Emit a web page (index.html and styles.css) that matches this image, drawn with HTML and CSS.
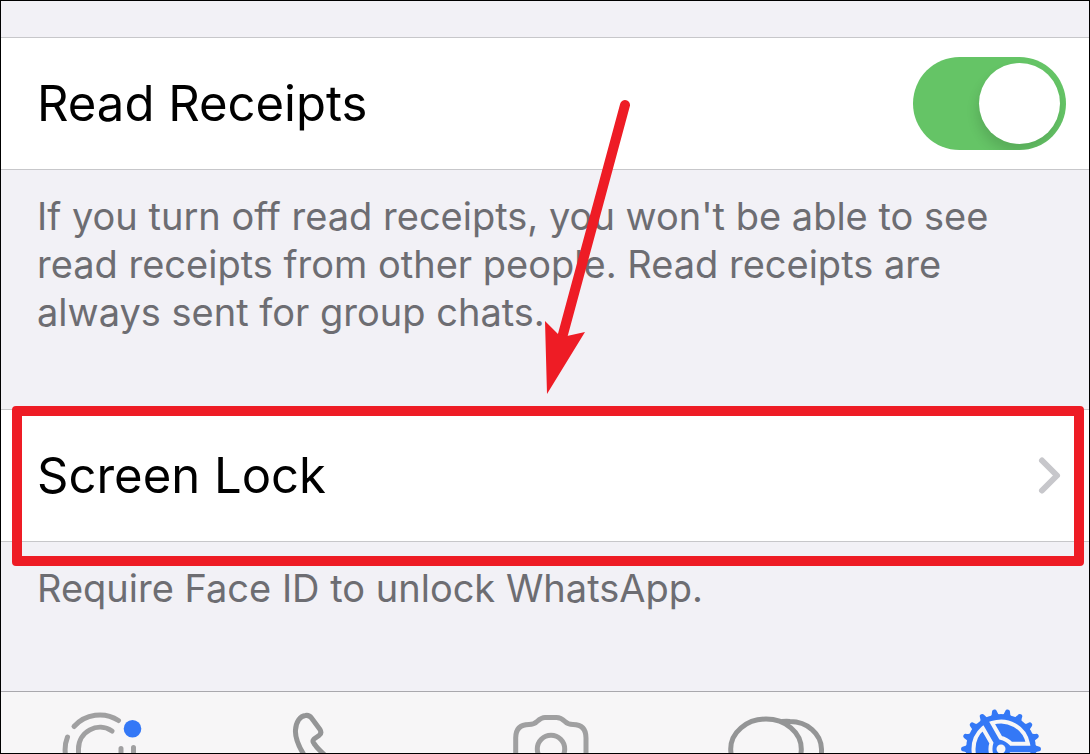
FILE: index.html
```html
<!DOCTYPE html>
<html lang="en">
<head>
  <meta charset="UTF-8" />
  <title>Privacy</title>
  <meta name="viewport" content="width=device-width, initial-scale=1.0" />
  <link rel="stylesheet" href="styles.css">
</head>
<body>

  <main class="settings">
    <section class="group">
      <label class="row" for="receipts">
        <span>Read Receipts</span>
        <input type="checkbox" class="switch" id="receipts" checked />
      </label>
      <p class="note">If you turn off read receipts, you won't be able to see read receipts from other people. Read receipts are always sent for group chats.</p>
    </section>

    <section class="group">
      <a class="row" href="#lock">
        <span>Screen Lock</span>
        <svg class="chevron" viewBox="0 0 30 40" aria-hidden="true">
          <path d="M6 4.500 L21 19.500 L6 34.500" />
        </svg>
      </a>
      <p class="note">Require Face ID to unlock WhatsApp.</p>

      <div class="highlight"></div>
      <svg class="arrow" viewBox="0 0 90 300" aria-hidden="true">
        <path class="shaft" d="M80 10 L17 243" />
        <path class="head" d="M0 226 L13 239 L22 241 L40 237 L2 299 Z" />
      </svg>
    </section>
  </main>

  <nav class="tabs">
    <a class="tab" href="#status" aria-label="Status">
      <svg viewBox="0 0 96 96">
        <path d="M21 34.5 A34.5 34.5 0 0 1 65.5 28.5" />
        <path d="M14.5 45 A34.5 34.5 0 0 0 12.7 64" />
        <path d="M59 39 A21.5 21.5 0 0 0 25.5 57 V66" />
        <path d="M68 56.5 V66 M80.5 55.5 V66" />
        <circle class="dot" cx="79.5" cy="36.8" r="8.8" />
      </svg>
    </a>
    <a class="tab dark" href="#calls" aria-label="Calls">
      <svg viewBox="0 0 96 96">
        <path d="M28 66 C20 54 17 45 17.5 38 C18 30 22 24 27.5 23.5 C30 23 32 24 33.5 26 L42 37.5 C43.5 40 43 42 41 43.5 L36 47 Q34 49 36 51.5 C39 56 43 60 49 65" />
      </svg>
    </a>
    <a class="tab" href="#camera" aria-label="Camera">
      <svg viewBox="0 0 96 96">
        <path d="M12.7 70 V46 Q12.7 32.5 26 32.5 Q31 32.5 34 29.5 Q38.5 25.5 42 25.5 H53.5 Q58 25.5 62 29.5 Q65 32.5 70 32.5 Q83 32.5 83 46 V70" />
        <circle cx="48" cy="57" r="13.7" />
      </svg>
    </a>
    <a class="tab dark" href="#chats" aria-label="Chats">
      <svg viewBox="0 0 96 96">
        <path d="M54 29.6 Q58 29.2 62 29.5 A31.5 28 0 0 1 93.5 57 V66" />
        <ellipse cx="38" cy="57" rx="35.3" ry="30" />
      </svg>
    </a>
    <a class="tab active" href="#settings" aria-label="Settings">
      <svg viewBox="-48 -57 96 96">
        <defs>
          <path id="tooth" d="M-5 -33 Q-2.8 -35 -2.3 -38.5 Q-2 -40 0 -40 Q2 -40 2.3 -38.5 Q2.8 -35 5 -33 Z" />
          <g id="teeth">
            <use href="#tooth" transform="rotate(10)" />
            <use href="#tooth" transform="rotate(30)" />
            <use href="#tooth" transform="rotate(50)" />
          </g>
          <path id="sector" d="M-18.1 -20.7 L-9.6 -6 Q-11.5 0 -9.6 6 L-18.1 20.7 A27.5 27.5 0 0 1 -18.1 -20.7 Z" />
        </defs>
        <circle class="gear" r="35" />
        <g class="gear">
          <use href="#teeth" />
          <use href="#teeth" transform="rotate(60)" />
          <use href="#teeth" transform="rotate(120)" />
          <use href="#teeth" transform="rotate(180)" />
          <use href="#teeth" transform="rotate(240)" />
          <use href="#teeth" transform="rotate(300)" />
        </g>
        <g class="cutout">
          <use href="#sector" />
          <use href="#sector" transform="rotate(120)" />
          <use href="#sector" transform="rotate(240)" />
        </g>
        <circle class="hub" r="4.5" />
      </svg>
    </a>
  </nav>

</body>
</html>
```
FILE: styles.css
```css
body {
  font-family: Inter, sans-serif;
  background: #f2f1f6;
  color: #000;
  margin: 0;
  height: 100vh;
  box-sizing: border-box;
  border: 1px solid #000;
  display: flex;
  flex-direction: column;
  overflow: hidden;
}

.settings {
  flex: 1;
  padding-top: 36px;
}

.group {
  position: relative;
  margin-bottom: 73px;
}

.row {
  display: flex;
  align-items: center;
  justify-content: space-between;
  min-height: 131px;
  padding: 0 23px 0 36px;
  background: #fff;
  border-top: 1px solid #c7c7ca;
  border-bottom: 1px solid #c7c7ca;
  color: #000;
  font-size: 49px;
  text-decoration: none;
}

.note {
  margin: 0;
  padding: 22px 36px 0;
  color: #6d6d72;
  font-size: 38px;
  line-height: 48px;
}

.switch {
  appearance: none;
  width: 153px;
  height: 93px;
  margin: 0;
  padding: 6px;
  box-sizing: border-box;
  border-radius: 47px;
  background: #c7c7ca;
  overflow: hidden;
  display: flex;
}

.switch::before {
  content: "";
  width: 81px;
  height: 81px;
  border-radius: 50%;
  background: #fff;
  box-shadow: -2px 8px 12px rgba(0, 0, 0, 0.12);
}

.switch:checked {
  background: #65c466;
  justify-content: flex-end;
}

.chevron {
  width: 30px;
  height: 40px;
  fill: none;
  stroke: #c7c7cb;
  stroke-width: 6;
  stroke-linecap: round;
  stroke-linejoin: round;
}

/* callout drawn over the Screen Lock row */
.highlight {
  position: absolute;
  top: -3px;
  left: 11px;
  right: 5px;
  height: 140px;
  border: 10px solid #ee1c25;
  border-radius: 4px;
  pointer-events: none;
}

.arrow {
  position: absolute;
  top: -314px;
  left: 50%;
  width: 90px;
  height: 300px;
  pointer-events: none;
}

.shaft {
  stroke: #ee1c25;
  stroke-width: 10;
  stroke-linecap: round;
}

.head {
  fill: #ee1c25;
}

.tabs {
  display: flex;
  justify-content: space-between;
  flex: 0 0 61px;
  padding: 0 40px 0 52px;
  background: #f7f6f7;
  border-top: 1px solid #a9a8ad;
  overflow: hidden;
}

.tab {
  color: #a0a0a1;
}

.tab svg {
  display: block;
  width: 96px;
  height: 96px;
  fill: none;
  stroke: currentColor;
  stroke-width: 5;
  stroke-linecap: round;
  stroke-linejoin: round;
}

.tab.dark {
  color: #949596;
}

.tab.active {
  color: #3478f6;
}

.tab .dot {
  fill: #3478f6;
  stroke: none;
}

.tab .gear {
  fill: currentColor;
  stroke: none;
}

.tab .cutout {
  fill: currentColor;
  stroke: #f7f6f7;
  stroke-width: 4;
  stroke-linejoin: miter;
}

.tab .hub {
  fill: #f7f6f7;
  stroke: none;
}
```
